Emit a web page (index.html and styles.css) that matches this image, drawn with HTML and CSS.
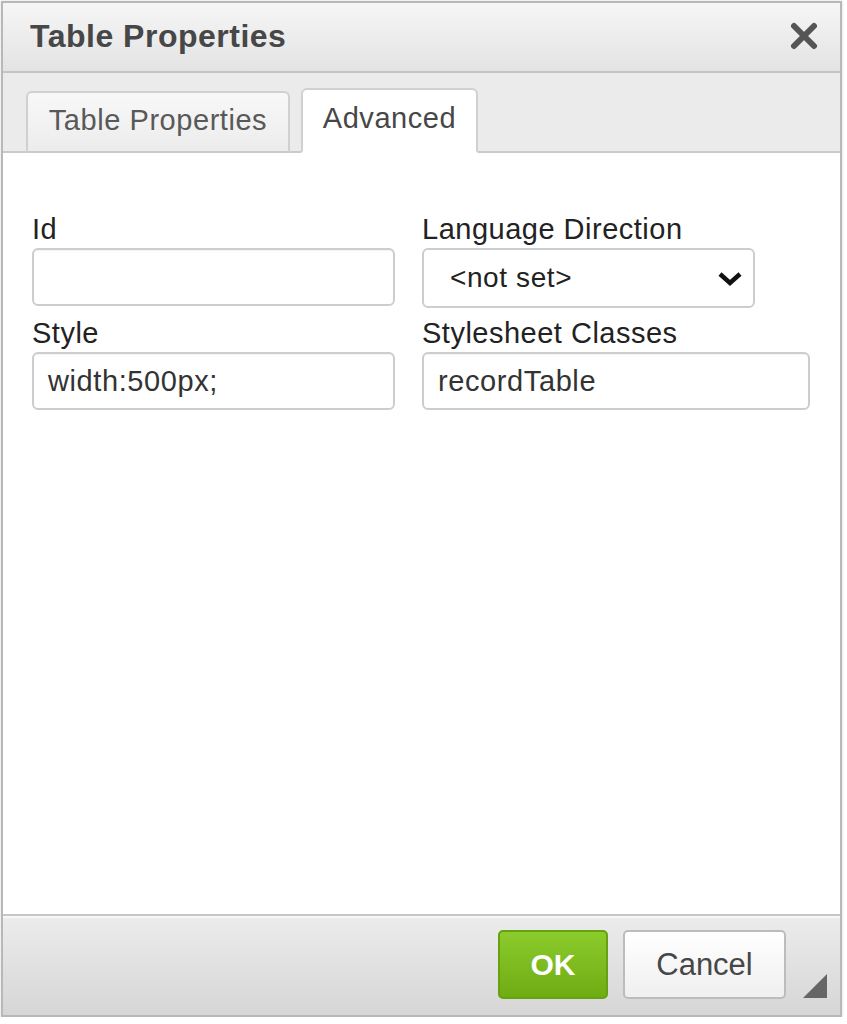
FILE: index.html
```html
<!DOCTYPE html>
<html>
<head>
<meta charset="utf-8">
<title>Table Properties</title>
<link rel="stylesheet" href="styles.css">
</head>
<body>
<div class="dialog">
  <div class="titlebar">
    <span class="title">Table Properties</span>
    <svg class="close" width="28" height="28" viewBox="0 0 28 28">
      <path d="M4 4 L24 24 M24 4 L4 24" stroke="#555" stroke-width="6" stroke-linecap="round"/>
    </svg>
  </div>
  <div class="tabs">
    <div class="tab">Table Properties</div>
    <div class="tab active">Advanced</div>
  </div>
  <div class="content">
    <div class="grid">
      <div class="field">
        <label class="label">Id</label>
        <div class="input"></div>
      </div>
      <div class="field">
        <label class="label">Language Direction</label>
        <div class="select">
          <span>&lt;not set&gt;</span>
          <svg width="26" height="18" viewBox="0 0 26 18">
            <path d="M3 4 L13 13 L23 4" fill="none" stroke="#111" stroke-width="4.5" stroke-linejoin="miter"/>
          </svg>
        </div>
      </div>
      <div class="field">
        <label class="label">Style</label>
        <div class="input">width:500px;</div>
      </div>
      <div class="field">
        <label class="label">Stylesheet Classes</label>
        <div class="input wide">recordTable</div>
      </div>
    </div>
  </div>
  <div class="footer">
    <div class="btn ok">OK</div>
    <div class="btn cancel">Cancel</div>
    <div class="grip"></div>
  </div>
</div>
</body>
</html>
```

FILE: styles.css
```css
* { box-sizing: border-box; }
html, body { margin: 0; padding: 0; background: #fff; }
body { font-family: "Liberation Sans", Arial, sans-serif; }

.dialog {
  margin: 1px 0 0 1px;
  width: 841px;
  height: 1016px;
  border: 2px solid #b8b8b8;
  box-shadow: 0 0 3px rgba(0,0,0,0.15);
  display: flex;
  flex-direction: column;
  background: #fff;
}

.titlebar {
  height: 70px;
  flex: none;
  display: flex;
  align-items: center;
  justify-content: space-between;
  padding: 0 22px 0 27px;
  background: linear-gradient(#f6f6f6, #e3e3e3);
  border-bottom: 2px solid #c4c4c4;
}
.title {
  font-size: 32px;
  font-weight: bold;
  color: #474747;
  letter-spacing: 0.5px;
  margin-top: -2px;
}
.close { display: block; margin-top: -2px; }

.tabs {
  height: 80px;
  flex: none;
  display: flex;
  align-items: flex-end;
  gap: 11px;
  padding-left: 23px;
  background: #ebebeb;
  border-bottom: 2px solid #cacaca;
}
.tab {
  height: 62px;
  margin-bottom: -2px;
  border: 2px solid #d0d0d0;
  border-bottom: 2px solid #cacaca;
  border-radius: 6px 6px 0 0;
  background: linear-gradient(#f8f8f8, #ececec);
  font-size: 29px;
  letter-spacing: 0.55px;
  color: #595959;
  display: flex;
  align-items: center;
  justify-content: center;
  padding-bottom: 4px;
}
.tab:first-child { width: 264px; }
.tab.active {
  width: 177px;
  height: 65px;
  background: #fff;
  border-bottom-color: #fff;
  color: #474747;
  padding-bottom: 5px;
}

.content {
  flex: 1;
  padding: 60px 0 0 29px;
}
.grid {
  display: grid;
  grid-template-columns: 363px 388px;
  column-gap: 27px;
  row-gap: 9px;
}
.field { display: flex; flex-direction: column; gap: 3px; }
.label {
  font-size: 29px;
  letter-spacing: 0.5px;
  line-height: 32px;
  color: #222;
}
.input {
  width: 363px;
  height: 58px;
  border: 2px solid #cbced1;
  border-radius: 6px;
  padding: 0 14px;
  font-size: 29px;
  letter-spacing: 0.6px;
  color: #333;
  display: flex;
  align-items: center;
  box-shadow: inset 0 1px 1px rgba(0,0,0,0.05);
}
.input.wide { width: 388px; }
.select {
  width: 333px;
  height: 60px;
  border: 2px solid #cbced1;
  border-radius: 6px;
  padding: 0 10px 0 26px;
  font-size: 28px;
  letter-spacing: 0.6px;
  color: #222;
  display: flex;
  align-items: center;
  justify-content: space-between;
}
.select svg { display: block; margin-top: 2px; }

.footer {
  position: relative;
  height: 101px;
  flex: none;
  border-top: 2px solid #c6c6c6;
  box-shadow: inset 0 2px 0 #f7f7f7;
  background: linear-gradient(#ececec, #d5d6d5);
  display: flex;
  justify-content: flex-end;
  align-items: flex-start;
  gap: 15px;
  padding: 14px 54px 0 0;
}
.btn {
  height: 69px;
  border-radius: 5px;
  font-size: 30px;
  font-weight: bold;
  display: flex;
  align-items: center;
  justify-content: center;
}
.ok {
  width: 110px;
  background: linear-gradient(#8ccb2c, #6eac13);
  border: 2px solid #68a10f;
  color: #fff;
}
.cancel {
  width: 163px;
  background: linear-gradient(#ffffff, #efefef);
  border: 2px solid #bcbcbc;
  color: #474747;
  font-weight: normal;
  font-size: 31px;
}
.grip {
  position: absolute;
  right: 13px;
  bottom: 17px;
  width: 0;
  height: 0;
  border-left: 24px solid transparent;
  border-bottom: 24px solid #666;
}
```
